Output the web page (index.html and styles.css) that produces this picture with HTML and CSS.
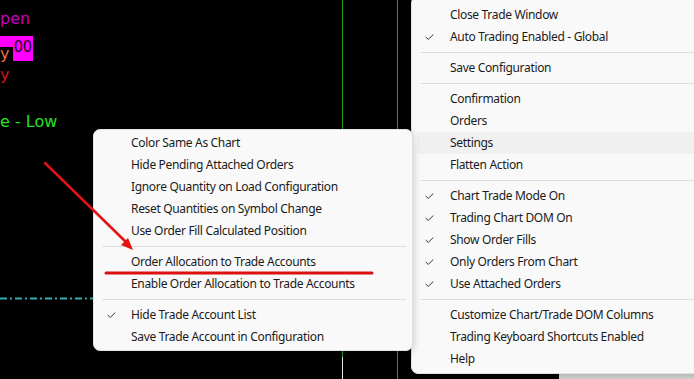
FILE: index.html
```html
<!DOCTYPE html>
<html>
<head>
<meta charset="utf-8">
<link rel="stylesheet" href="styles.css">
</head>
<body>
<div class="screen">
  <div class="chart">
    <div class="vline vline-a"></div>
    <div class="vline vline-b"></div>
    <div class="vline-white"></div>
    <div class="lbl lbl-open">pen</div>
    <div class="price-box"><span class="price-text">00</span></div>
    <div class="lbl lbl-orange">y</div>
    <div class="lbl lbl-red">y</div>
    <div class="lbl lbl-green">e - Low</div>
    <svg class="dash" width="94" height="3" viewBox="0 0 94 3"><line x1="0" y1="1.5" x2="94" y2="1.5" stroke="#3aa9a9" stroke-width="2" stroke-dasharray="7 3 2 3"/></svg>
    <div class="corner-gray"></div>
  </div>

  <div class="menu menu-main">
    <div class="item">Close Trade Window</div>
    <div class="item checked"><svg class="chk" viewBox="0 0 10 7"><polyline points="0.5,3.5 3.5,6.3 9.5,0.6"/></svg>Auto Trading Enabled - Global</div>
    <div class="sep"></div>
    <div class="item">Save Configuration</div>
    <div class="sep"></div>
    <div class="item">Confirmation</div>
    <div class="item">Orders</div>
    <div class="item hover">Settings</div>
    <div class="item">Flatten Action</div>
    <div class="sep"></div>
    <div class="item checked"><svg class="chk" viewBox="0 0 10 7"><polyline points="0.5,3.5 3.5,6.3 9.5,0.6"/></svg>Chart Trade Mode On</div>
    <div class="item checked"><svg class="chk" viewBox="0 0 10 7"><polyline points="0.5,3.5 3.5,6.3 9.5,0.6"/></svg>Trading Chart DOM On</div>
    <div class="item checked"><svg class="chk" viewBox="0 0 10 7"><polyline points="0.5,3.5 3.5,6.3 9.5,0.6"/></svg>Show Order Fills</div>
    <div class="item checked"><svg class="chk" viewBox="0 0 10 7"><polyline points="0.5,3.5 3.5,6.3 9.5,0.6"/></svg>Only Orders From Chart</div>
    <div class="item checked"><svg class="chk" viewBox="0 0 10 7"><polyline points="0.5,3.5 3.5,6.3 9.5,0.6"/></svg>Use Attached Orders</div>
    <div class="sep"></div>
    <div class="item">Customize Chart/Trade DOM Columns</div>
    <div class="item">Trading Keyboard Shortcuts Enabled</div>
    <div class="item">Help</div>
  </div>

  <div class="menu menu-sub">
    <div class="item">Color Same As Chart</div>
    <div class="item">Hide Pending Attached Orders</div>
    <div class="item">Ignore Quantity on Load Configuration</div>
    <div class="item">Reset Quantities on Symbol Change</div>
    <div class="item">Use Order Fill Calculated Position</div>
    <div class="sep"></div>
    <div class="item">Order Allocation to Trade Accounts</div>
    <div class="item">Enable Order Allocation to Trade Accounts</div>
    <div class="sep"></div>
    <div class="item checked"><svg class="chk" viewBox="0 0 10 7"><polyline points="0.5,3.5 3.5,6.3 9.5,0.6"/></svg>Hide Trade Account List</div>
    <div class="item">Save Trade Account in Configuration</div>
  </div>

  <svg class="annot" width="694" height="379" viewBox="0 0 694 379">
    <line x1="45" y1="163" x2="127" y2="243" stroke="#e41212" stroke-width="2.5" stroke-linecap="round"/>
    <polygon points="133,250 121,245 128,238" fill="#e41212"/>
    <line x1="106" y1="273" x2="372" y2="273" stroke="#dc1010" stroke-width="3" stroke-linecap="round"/>
  </svg>
</div>
</body>
</html>
```

FILE: styles.css
```css
html, body {
  margin: 0;
  padding: 0;
  background: #000;
}
.screen {
  position: relative;
  width: 694px;
  height: 379px;
  overflow: hidden;
  background: #000;
  font-family: "Noto Sans", "Open Sans", sans-serif;
}
.chart {
  position: absolute;
  inset: 0;
}
.vline {
  position: absolute;
  top: 0;
  bottom: 0;
  width: 1px;
  background: #22a022;
}
.vline-a { left: 342px; }
.vline-b { left: 397px; }
.vline-white {
  position: absolute;
  left: 342px;
  top: 357px;
  bottom: 0;
  width: 1px;
  background: #e8e8e8;
}
.lbl {
  position: absolute;
  font-family: "DejaVu Sans", sans-serif;
  font-size: 16px;
  line-height: 18px;
  white-space: nowrap;
}
.lbl-open {
  left: 0;
  top: 10px;
  color: #c400c4;
}
.lbl-red {
  left: 0;
  top: 66px;
  color: #d01414;
}
.lbl-orange {
  left: 0;
  top: 47px;
  width: 13px;
  height: 15px;
  line-height: 13px;
  background: #000;
  color: #e07438;
}
.lbl-green {
  left: 0;
  top: 113px;
  color: #22e022;
}
.price-box {
  position: absolute;
  left: 0;
  top: 36px;
  width: 33px;
  height: 25px;
  background: #ff00ff;
  overflow: hidden;
}
.price-text {
  position: absolute;
  right: 1px;
  top: 2px;
  font-family: "DejaVu Sans Condensed", "DejaVu Sans", sans-serif;
  font-size: 16px;
  line-height: 18px;
  color: #1a001a;
}
.dash {
  position: absolute;
  left: 0;
  top: 297px;
}
.corner-gray {
  position: absolute;
  left: 559px;
  top: 373px;
  right: 0;
  bottom: 0;
  background: #d9d9d9;
}
.menu {
  position: absolute;
  display: flex;
  flex-direction: column;
  background: #f9f9f9;
  border: 1px solid #e2e2e2;
  box-sizing: border-box;
  border-radius: 7px;
  box-shadow: 0 2px 8px rgba(0, 0, 0, 0.22);
  color: #1b1b1b;
  font-size: 12px;
  letter-spacing: -0.33px;
}
.menu-main {
  left: 411px;
  top: -4px;
  width: 300px;
  padding: 7px 4px 3px 5px;
}
.menu-sub {
  left: 93px;
  top: 129px;
  width: 320px;
  padding: 2px 4px 2px 4px;
}
.item {
  position: relative;
  height: 22px;
  line-height: 22px;
  padding-left: 33px;
  white-space: nowrap;
  border-radius: 4px;
}
.item.hover {
  background: #f0f0f0;
}
.chk {
  position: absolute;
  left: 8px;
  top: 8px;
  width: 9px;
  height: 6px;
  fill: none;
  stroke: #2a2a2a;
  stroke-width: 1.1;
}
.menu-sub .chk {
  left: 9px;
}
.sep {
  height: 9px;
  display: flex;
  align-items: center;
  padding: 0 2px 0 4px;
}
.sep::before {
  content: "";
  flex: 1;
  height: 1px;
  background: #dcdcdc;
}
.annot {
  position: absolute;
  left: 0;
  top: 0;
  pointer-events: none;
}
```
